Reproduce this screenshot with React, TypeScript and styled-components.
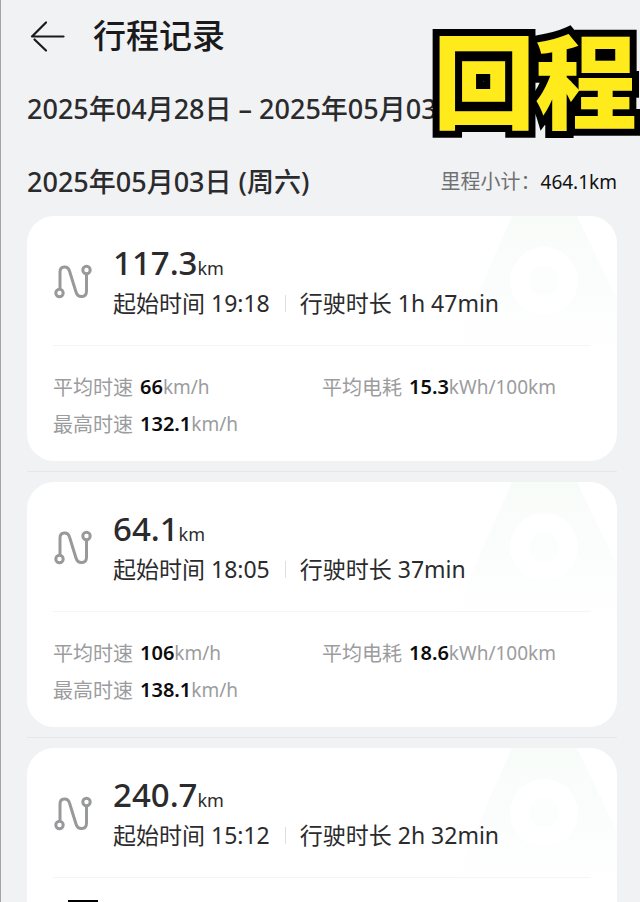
import React, { useId } from "react";
import styled, { createGlobalStyle } from "styled-components";

const GlobalStyle = createGlobalStyle`
  *, *::before, *::after { box-sizing: border-box; }
  body {
    margin: 0;
    background: #f1f2f4;
    color: #2b2b2d;
    font-family: "Noto Sans", "Noto Sans CJK SC", sans-serif;
  }
  h1, h2, p, dl, dt, dd, ul { margin: 0; padding: 0; }
`;

const Screen = styled.main`
  position: relative;
  height: 100vh;
  overflow: hidden;
  padding: 12px 23px 0 26px;
  border-left: 1px solid #a3a4a6;
`;

const Header = styled.header`
  display: flex;
  align-items: center;
  gap: 28px;
  height: 48px;
`;

const BackButton = styled.button`
  display: flex;
  width: 38px;
  height: 38px;
  padding: 0;
  border: 0;
  background: none;
  color: #1a1a1c;
`;

const Title = styled.h1`
  font-size: 33px;
  line-height: 48px;
  font-weight: 500;
  color: #1a1a1c;
`;

const DateRange = styled.p`
  margin-top: 29px;
  font-size: 27px;
  line-height: 40px;
  font-weight: 500;
  white-space: nowrap;
`;

const DayHeader = styled.div`
  display: flex;
  align-items: center;
  justify-content: space-between;
  margin-top: 33px;
  height: 40px;
`;

const DayTitle = styled.h2`
  font-size: 27px;
  line-height: 40px;
  font-weight: 500;
`;

const Subtotal = styled.p`
  display: flex;
  font-size: 20px;
  line-height: 30px;
  color: #6f7072;
`;

const SubtotalValue = styled.span`
  font-size: 19px;
  color: #111;
`;

const TripList = styled.ul`
  list-style: none;
  margin-top: 14px;
`;

const TripItem = styled.li`
  & + & {
    margin-top: 10px;
    padding-top: 10px;
    border-top: 1px solid #e6e7e9;
  }
`;

const Card = styled.article`
  position: relative;
  overflow: hidden;
  padding: 27px 26px 18px;
  border-radius: 27px;
  background: #fff;
`;

const Watermark = styled.svg`
  position: absolute;
  top: 0;
  right: 0;
  width: 170px;
  height: 140px;
`;

const Summary = styled.div`
  position: relative;
  display: flex;
  align-items: center;
  gap: 20px;
  padding-bottom: 27px;
  border-bottom: 1px solid #f5f5f6;
`;

const RouteIcon = styled.svg`
  flex: none;
  width: 40px;
  height: 40px;
`;

const Distance = styled.p`
  font-size: 33px;
  line-height: 40px;
  font-weight: 500;
`;

const Unit = styled.span`
  font-size: 18px;
  font-weight: 400;
`;

const Times = styled.p`
  display: flex;
  align-items: center;
  font-size: 23px;
  line-height: 30px;
  white-space: nowrap;
`;

const Separator = styled.span`
  width: 1px;
  height: 17px;
  margin: 0 14px 0 15px;
  background: #dedfe0;
`;

const Stats = styled.dl`
  display: grid;
  grid-template-columns: 1fr 1fr;
  align-content: start;
  min-height: 97px;
  padding-top: 23px;
`;

const Stat = styled.div`
  display: flex;
  gap: 7px;
  font-size: 20px;
  line-height: 37px;
  color: #9b9c9e;
  white-space: nowrap;
`;

const StatValue = styled.dd`
  font-size: 19px;
`;

const StatNumber = styled.b`
  font-size: 20px;
  line-height: 36px;
  font-weight: 600;
  color: #0c0c0d;
`;

const Caption = styled.strong`
  position: absolute;
  top: 3px;
  left: 432px;
  font-family: "Noto Sans CJK SC", sans-serif;
  font-size: 102px;
  line-height: 148px;
  font-weight: 900;
  color: #ffeb1b;
  white-space: nowrap;
  -webkit-text-stroke: 14px #000;
  paint-order: stroke fill;
`;

const LowerCaptionEdge = styled.div`
  position: absolute;
  bottom: 0;
  left: 67px;
  width: 30px;
  height: 2px;
  background: #000;
`;

type StatData = { label: string; value: string; unit: string };
type Trip = { distance: string; start: string; duration: string; stats: StatData[] };

const trips: Trip[] = [
  {
    distance: "117.3",
    start: "19:18",
    duration: "1h 47min",
    stats: [
      { label: "平均时速", value: "66", unit: "km/h" },
      { label: "平均电耗", value: "15.3", unit: "kWh/100km" },
      { label: "最高时速", value: "132.1", unit: "km/h" },
    ],
  },
  {
    distance: "64.1",
    start: "18:05",
    duration: "37min",
    stats: [
      { label: "平均时速", value: "106", unit: "km/h" },
      { label: "平均电耗", value: "18.6", unit: "kWh/100km" },
      { label: "最高时速", value: "138.1", unit: "km/h" },
    ],
  },
  { distance: "240.7", start: "15:12", duration: "2h 32min", stats: [] },
];

function TripCard({ trip }: { trip: Trip }) {
  const gradient = useId();
  return (
    <Card>
      <Watermark viewBox="0 0 170 140" aria-hidden="true">
        <defs>
          <linearGradient id={gradient} x1="0" y1="0" x2="0" y2="1">
            <stop offset="0" stopColor="#f8fcf9" />
            <stop offset="0.5" stopColor="#fbfdfc" />
            <stop offset="1" stopColor="#ffffff" />
          </linearGradient>
        </defs>
        <path d="M65 0H130L170 83V140H4C16 112 24 93 34 70Z" fill={`url(#${gradient})`} />
        <circle cx="97" cy="65" r="34" fill="#fff" />
        <circle cx="97" cy="65" r="15" fill="#fcfefd" />
      </Watermark>
      <Summary>
        <RouteIcon viewBox="0 0 40 40" fill="none" stroke="#98999b" strokeWidth="3" aria-hidden="true">
          <circle cx="6.500" cy="32" r="3.700" />
          <circle cx="33.500" cy="9" r="3.700" />
          <path d="M7 28V11C7 4.500 15 4.500 16.500 10L23 31C25 37.500 33.500 37 33.500 30V13" />
        </RouteIcon>
        <div>
          <Distance>
            {trip.distance}
            <Unit>km</Unit>
          </Distance>
          <Times>
            <span>起始时间 {trip.start}</span>
            <Separator />
            <span>行驶时长 {trip.duration}</span>
          </Times>
        </div>
      </Summary>
      <Stats>
        {trip.stats.map((stat) => (
          <Stat key={stat.label}>
            <dt>{stat.label}</dt>
            <StatValue>
              <StatNumber>{stat.value}</StatNumber>
              {stat.unit}
            </StatValue>
          </Stat>
        ))}
      </Stats>
    </Card>
  );
}

export default function App() {
  return (
    <>
      <GlobalStyle />
      <Screen>
        <Header>
          <BackButton type="button" aria-label="返回">
            <svg width="38" height="38" viewBox="0 0 38 38" fill="none" stroke="currentColor" strokeWidth="2.200" strokeLinecap="round" strokeLinejoin="round">
              <path d="M36.500 19.500H5L19 5.500M7.500 22.500L19 33.500" />
            </svg>
          </BackButton>
          <Title>行程记录</Title>
        </Header>
        <DateRange>2025年04月28日 – 2025年05月03日</DateRange>
        <DayHeader>
          <DayTitle>2025年05月03日 (周六)</DayTitle>
          <Subtotal>
            <span>里程小计：</span>
            <SubtotalValue>464.1km</SubtotalValue>
          </Subtotal>
        </DayHeader>
        <TripList>
          {trips.map((trip) => (
            <TripItem key={trip.distance}>
              <TripCard trip={trip} />
            </TripItem>
          ))}
        </TripList>
        <Caption>回程</Caption>
        <LowerCaptionEdge />
      </Screen>
    </>
  );
}
